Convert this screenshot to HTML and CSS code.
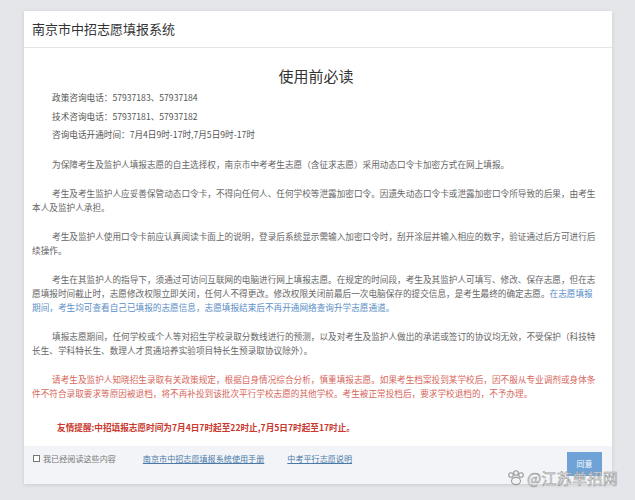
FILE: index.html
```html
<!DOCTYPE html>
<html lang="zh-CN">
<head>
<meta charset="utf-8">
<title>南京市中招志愿填报系统</title>
<link rel="stylesheet" href="styles.css">
</head>
<body>
<div class="modal">
  <div class="modal-header">南京市中招志愿填报系统</div>
  <div class="modal-body">
    <h1 class="main-title">使用前必读</h1>
    <div class="info">
      <p>政策咨询电话：57937183、57937184</p>
      <p>技术咨询电话：57937181、57937182</p>
      <p>咨询电话开通时间：7月4日9时-17时,7月5日9时-17时</p>
    </div>
    <p class="para">为保障考生及监护人填报志愿的自主选择权，南京市中考考生志愿（含征求志愿）采用动态口令卡加密方式在网上填报。</p>
    <p class="para">考生及考生监护人应妥善保管动态口令卡，不得向任何人、任何学校等泄露加密口令。因遗失动态口令卡或泄露加密口令所导致的后果，由考生本人及监护人承担。</p>
    <p class="para">考生及监护人使用口令卡前应认真阅读卡面上的说明，登录后系统显示需输入加密口令时，刮开涂层并输入相应的数字，验证通过后方可进行后续操作。</p>
    <p class="para">考生在其监护人的指导下，须通过可访问互联网的电脑进行网上填报志愿。在规定的时间段，考生及其监护人可填写、修改、保存志愿，但在志愿填报时间截止时，志愿修改权限立即关闭，任何人不得更改。修改权限关闭前最后一次电脑保存的提交信息，是考生最终的确定志愿。<span class="blue">在志愿填报期间，考生均可查看自己已填报的志愿信息，志愿填报结束后不再开通网络查询升学志愿通道。</span></p>
    <p class="para">填报志愿期间，任何学校或个人等对招生学校录取分数线进行的预测，以及对考生及监护人做出的承诺或签订的协议均无效，不受保护（科技特长生、学科特长生、数理人才贯通培养实验项目特长生预录取协议除外）。</p>
    <p class="para red">请考生及监护人知晓招生录取有关政策规定，根据自身情况综合分析，慎重填报志愿。如果考生档案投到某学校后，因不服从专业调剂或身体条件不符合录取要求等原因被退档，将不再补投到该批次平行学校志愿的其他学校。考生被正常投档后，要求学校退档的，不予办理。</p>
    <p class="para notice">友情提醒:中招填报志愿时间为7月4日7时起至22时止,7月5日7时起至17时止。</p>
  </div>
  <div class="modal-footer">
    <label class="agree"><span class="box"></span>我已经阅读这些内容</label>
    <a class="link link-manual" href="#">南京市中招志愿填报系统使用手册</a>
    <a class="link" href="#">中考平行志愿说明</a>
    <button class="btn">同意</button>
  </div>
</div>
<div class="watermark">
  <svg class="wm-icon" width="18" height="16" viewBox="0 0 18 16">
    <g fill="none" stroke="#9a9a9a" stroke-width="1.1">
      <circle cx="4" cy="5" r="2.3"/>
      <circle cx="9" cy="3" r="2.3"/>
      <circle cx="14" cy="5" r="2.3"/>
      <ellipse cx="9" cy="11" rx="4.5" ry="3.6"/>
    </g>
  </svg>
  <span class="wm-text">@江苏单招网</span>
</div>
</body>
</html>
```
FILE: styles.css
```css
html, body {
  margin: 0;
  padding: 0;
}
body {
  background: #e4e6e9;
  width: 635px;
  height: 500px;
  overflow: hidden;
  font-family: "Noto Sans CJK SC", "Noto Sans", sans-serif;
  position: relative;
}
.modal {
  margin: 11px 0 0 24px;
  width: 588px;
  background: #fff;
  box-shadow: 0 1px 4px rgba(0,0,0,0.12);
}
.modal-header {
  height: 36px;
  line-height: 36px;
  padding-left: 8px;
  font-size: 13px;
  color: #333;
  border-bottom: 1px solid #e6e6e6;
}
.modal-body {
  padding: 18px 12px 12px 8px;
  color: #666;
  font-size: 8.65px;
}
.main-title {
  margin: 0;
  font-size: 15px;
  font-weight: normal;
  line-height: 20px;
  text-align: center;
  color: #333;
}
.info {
  margin: 2px 0 13px 0;
}
.info p {
  margin: 0;
  padding-left: 20px;
  line-height: 18.5px;
  color: #555;
}
.para {
  margin: 15px 0 0 0;
  line-height: 14px;
  text-indent: 20px;
}
.info + .para {
  margin-top: 0;
}
.blue {
  color: #5b8ec6;
}
.red {
  color: #d6675c;
}
.notice {
  margin-top: 20px;
  line-height: 14px;
  font-weight: bold;
  color: #c9382d;
  text-indent: 25px;
}
.modal-footer {
  display: flex;
  align-items: flex-start;
  height: 38px;
  box-sizing: border-box;
  padding: 6px 10px 0 9px;
  background: #f2f4f7;
  font-size: 8.1px;
}
.agree {
  display: flex;
  align-items: center;
  line-height: 14px;
  color: #777;
}
.box {
  width: 5px;
  height: 5px;
  border: 1px solid #777;
  margin-right: 3px;
  background: #fff;
}
.link {
  line-height: 14px;
  color: #4a79a8;
  text-decoration: underline;
  margin-left: 23px;
}
.link-manual {
  margin-left: 27px;
}
.btn {
  margin-left: auto;
  width: 35px;
  height: 24px;
  border: none;
  padding: 0;
  background: #6fa3d7;
  color: #fff;
  font-family: "Noto Sans CJK SC", sans-serif;
  font-size: 8px;
}
.watermark {
  position: absolute;
  left: 507px;
  top: 469px;
  display: flex;
  align-items: center;
}
.wm-icon {
  margin-right: 2px;
}
.wm-text {
  font-size: 15px;
  line-height: 18px;
  color: rgba(255,255,255,0.92);
  -webkit-text-stroke: 0.6px #9a9a9a;
  letter-spacing: 0.3px;
}
```
